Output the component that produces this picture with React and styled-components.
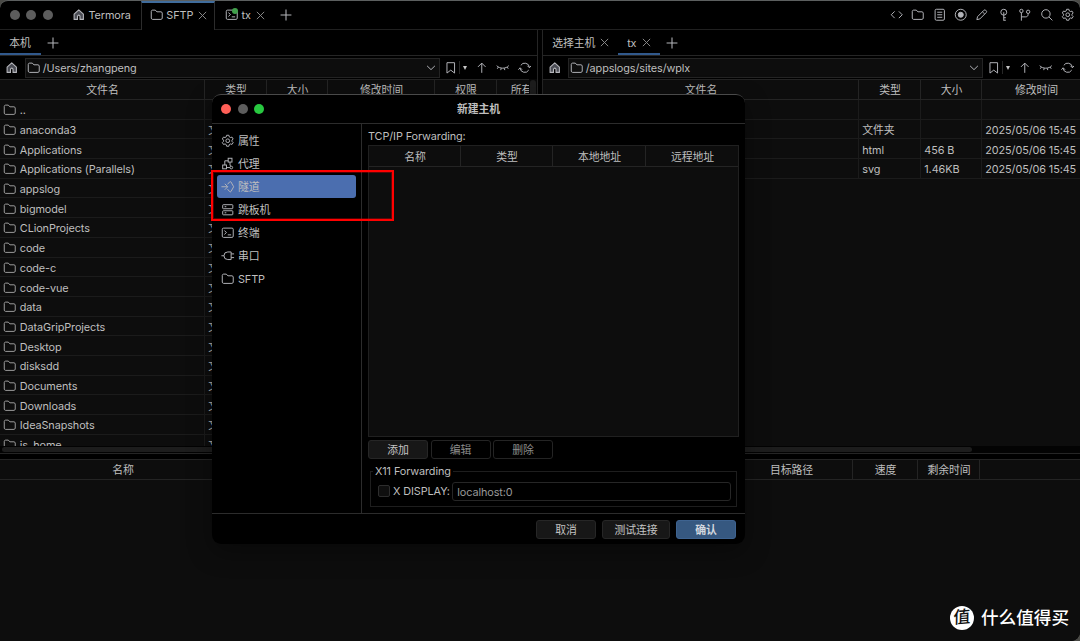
import styled, { createGlobalStyle, css } from "styled-components";

const GlobalStyle = createGlobalStyle`
  :root {
    --color-bg: #000;
    --color-panel: #0d0d0d;
    --color-line: #242424;
    --color-row-line: #1b1b1b;
    --color-text: #bfbfbf;
    --color-accent: #31598c;
  }

  * {
    box-sizing: border-box;
  }

  body {
    margin: 0;
    width: 1080px;
    height: 641px;
    overflow: hidden;
    background: #4a4a46;
    color: var(--color-text);
    font-family: Inter, "Noto Sans CJK SC", sans-serif;
    font-size: 10.86px;
    letter-spacing: -0.1px;
    line-height: 16px;
  }
`;

const Svg = styled.svg`
  display: block;
  flex: none;
  width: 13.5px;
  height: 13.5px;
  fill: none;
  stroke: currentColor;
  stroke-width: 1.15;
  color: ${(props) => props.$color || "#b4b5ba"};
`;

const icons = {
  home: (
    <path
      d="M2.5 7.2 8 2.2l5.5 5v6.3h-4V10a1.5 1.5 0 0 0-3 0v3.5h-4z"
      fill="#4b4d55"
      strokeLinejoin="round"
      strokeWidth="1.3"
    />
  ),
  folder: (
    <path d="M1.5 4c0-.8.7-1.5 1.5-1.5h3.1l2.2 2H13c.8 0 1.5.7 1.5 1.5v6c0 .8-.7 1.5-1.5 1.5H3c-.8 0-1.5-.7-1.5-1.5z" />
  ),
  close: <path d="m3.5 3.5 9 9m0-9-9 9" />,
  plus: <path d="M8 1.8v12.4M1.8 8h12.4" strokeWidth="1.2" />,
  terminal: (
    <>
      <rect x="1.5" y="2.5" width="13" height="11" rx="1.5" />
      <path d="m4 5.5 2.5 2.2L4 10M8 10.5h4" />
    </>
  ),
  code: <path d="m5.5 4-4 4 4 4m5-8 4 4-4 4" />,
  log: (
    <>
      <rect x="2.5" y="1.5" width="11" height="13" rx="1.5" />
      <path d="M5 5h6M5 8h6m-6 3h6" />
    </>
  ),
  record: (
    <>
      <circle cx="8" cy="8" r="6.5" />
      <circle cx="8" cy="8" r="3" fill="currentColor" />
    </>
  ),
  pencil: (
    <path d="M2.2 13.8 3 10.3 10.6 2.7a1.5 1.5 0 0 1 2.1 0l.6.6a1.5 1.5 0 0 1 0 2.1L5.7 13zM8.8 4.5l2.7 2.7" />
  ),
  key: (
    <>
      <circle cx="8" cy="5" r="3.5" />
      <path d="M8 5v10M8 11.5h2.5M8 14.5h2.5" />
    </>
  ),
  branch: (
    <>
      <circle cx="4" cy="3.5" r="2" />
      <circle cx="12" cy="4.5" r="2" />
      <path d="M4 5.5V15M12 6.5v1c0 1.8-1 3-3 3H4" />
    </>
  ),
  search: (
    <>
      <circle cx="7" cy="7" r="5" />
      <path d="m10.7 10.7 4 4" />
    </>
  ),
  gear: (
    <>
      <path
        d="M6.7 1.5h2.6l.6 2 1.2.7 2-.5 1.3 2.2L13 7.3v1.4l1.4 1.4-1.3 2.2-2-.5-1.2.7-.6 2H6.7l-.6-2-1.2-.7-2 .5-1.3-2.2L3 8.7V7.3L1.6 5.9l1.3-2.2 2 .5 1.2-.7z"
        strokeLinejoin="round"
      />
      <circle cx="8" cy="8" r="2.2" />
    </>
  ),
  chevron: <path d="m2.8 5.5 5.2 5 5.2-5" strokeWidth="1.3" />,
  bookmark: <path d="M3.5 2h9v12.3L8 10.8l-4.5 3.5z" />,
  up: <path d="M8 14V2.5M3.5 7 8 2.5 12.5 7" />,
  eye: (
    <path d="M.8 5.5c3.5 4 10.9 4 14.4 0M2.8 7.2 1.5 9.2M6.2 8.5l-.6 2.3M9.8 8.5l.6 2.3M13.2 7.2l1.3 2" />
  ),
  refresh: (
    <path d="M2.500 8.500a5.500 5.500 0 0 0 10.200 2.300M13.500 7.500A5.500 5.500 0 0 0 3.300 5.200M.5 10.300l2-2.300 2.300 2.300M15.500 5.700l-2 2.300-2.300-2.300" />
  ),
  proxy: (
    <>
      <rect x="8.5" y="1.5" width="4.5" height="4.5" />
      <rect x="2" y="9.5" width="4.5" height="4.5" />
      <circle cx="12.2" cy="12.5" r="1.6" />
      <path d="M8.5 4.5h-4v5M6.5 12.5h4M10.7 6v3.5l.8 1.4" />
    </>
  ),
  tunnel: (
    <path d="M.5 8h7.2M4.5 4.5 8 8l-3.5 3.5M7.7 5.2l2.5-2.9q.8-.8 1.6 0L15 8l-3.2 5.7q-.8.8-1.6 0l-2.5-2.9" />
  ),
  server: (
    <>
      <rect x="2" y="2" width="12" height="4.8" rx=".8" />
      <rect x="2" y="9.2" width="12" height="4.8" rx=".8" />
      <path d="M4.3 4.4h2M4.3 11.6h2" />
    </>
  ),
  plug: (
    <path d="M.5 8h3M12 3.5H8A4.5 4.5 0 0 0 8 12.5h4zM12 5.8h3.5M12 10.2h3.5" />
  ),
};

function Icon({ name, color }) {
  return (
    <Svg viewBox="0 0 16 16" $color={color}>
      {icons[name]}
    </Svg>
  );
}

const Window = styled.div`
  position: relative;
  display: flex;
  flex-direction: column;
  width: 1080px;
  height: 641px;
  overflow: hidden;
  background: var(--color-bg);
  border-top: 1px solid #5c5f5f;
  border-radius: 8px 8px 9px 0;
`;

const TitleBar = styled.header`
  display: flex;
  height: 29px;
  flex: none;
  border-bottom: 1px solid #202020;
`;

const Lights = styled.div`
  display: flex;
  align-items: center;
  gap: 6.5px;
  padding-left: ${(props) => props.$left || "9.8px"};
`;

const Light = styled.span`
  width: 10px;
  height: 10px;
  border-radius: 50%;
  background: ${(props) => props.$color || "#5d5d5d"};
`;

const MainTab = styled.div`
  position: relative;
  display: flex;
  align-items: center;
  gap: ${(props) => props.$gap || "3px"};
  width: ${(props) => props.$width};
  height: 28px;
  padding-left: ${(props) => props.$left};
  ${(props) =>
    props.$active &&
    css`
      height: 29px;
      padding-bottom: 3px;
      border: 1px solid #2c2c2c;
      border-top: 2px solid #406c9c;
      border-bottom: none;
      background: #000;
    `}
`;

const CloseButton = styled.span`
  display: flex;
  svg {
    width: 13px;
    height: 13px;
    color: #8d8d8d;
  }
`;

const AddButton = styled.span`
  display: flex;
  align-items: center;
  margin-left: ${(props) => props.$left || "0"};
  svg {
    width: 14px;
    height: 14px;
  }
`;

const OnlineDot = styled.span`
  position: absolute;
  top: 7px;
  left: 17px;
  width: 6px;
  height: 6px;
  border-radius: 50%;
  background: #41a04b;
`;

const Tools = styled.div`
  display: flex;
  align-items: center;
  gap: 7.9px;
  margin-left: auto;
  padding-right: 5.5px;
`;

const Panes = styled.main`
  display: flex;
  gap: 4px;
  height: 424px;
  flex: none;
`;

const Pane = styled.section`
  display: flex;
  flex-direction: column;
  width: 538px;
  min-width: 0;
  overflow: hidden;
  border-left: ${(props) => (props.$divided ? "1px solid #252525" : "none")};
  border-right: ${(props) => (props.$divided ? "none" : "1px solid #252525")};
`;

const SubTabs = styled.div`
  display: flex;
  flex: none;
  height: 26px;
  border-bottom: 1px solid #252525;
`;

const SubTab = styled.div`
  display: flex;
  align-items: center;
  gap: ${(props) => props.$gap || "3px"};
  height: 25px;
  padding: 2px ${(props) => props.$right || "6.5px"} 0 9.3px;
  border-bottom: 2px solid
    ${(props) => (props.$active ? "var(--color-accent)" : "transparent")};
`;

const PathBar = styled.div`
  display: flex;
  align-items: center;
  flex: none;
  height: 23px;
  padding-left: 5.3px;
`;

const PathInput = styled.div`
  display: flex;
  align-items: center;
  gap: 2.5px;
  width: 415px;
  height: 20px;
  margin: 0 4.5px 0 6px;
  padding: 0 2px 0 1px;
  background: var(--color-panel);
  border: 1px solid #242424;

  svg:last-child {
    width: 12px;
    margin-left: auto;
  }
`;

const PathActions = styled.div`
  display: flex;
  align-items: center;
  gap: 8px;
`;

const BookmarkButton = styled.div`
  display: flex;
  align-items: center;
`;

const Separator = styled.span`
  width: 1px;
  height: 13px;
  margin: 0 3px 0 1px;
  background: #272727;
`;

const Caret = styled.span`
  border: 2.5px solid transparent;
  border-top: 4px solid #c5c5c5;
  border-bottom: 0;
`;

const TableArea = styled.div`
  display: flex;
  flex: 1;
  min-height: 0;
  overflow: hidden;
  background: var(--color-panel);
`;

const Table = styled.div`
  width: ${(props) => props.$width};
  flex: none;
`;

const Row = styled.div`
  display: grid;
  grid-template-columns: ${(props) => props.$cols};
  height: 19.7px;
  border-bottom: 1px solid var(--color-row-line);
`;

const HeaderRow = styled(Row)`
  height: 21px;
  border-top: 1px solid var(--color-line);
  border-bottom: 1px solid var(--color-line);
`;

const Cell = styled.div`
  display: flex;
  align-items: center;
  gap: 3px;
  overflow: hidden;
  padding: 2px 3.3px 0;
  white-space: nowrap;
  border-right: 1px solid var(--color-row-line);

  svg {
    margin-top: -0.5px;
  }
`;

const HeaderCell = styled(Cell)`
  justify-content: center;
  padding: 1px 2.5px 0 3.5px;
  border-color: var(--color-line);

  &:last-child {
    border-right: none;
  }
`;

const VerticalScroll = styled.div`
  width: 8px;
  margin-left: auto;
  padding: 1px;
  background: #080808;

  &::before {
    content: "";
    display: block;
    height: 180px;
    border-radius: 3px;
    background: #1d1d1d;
  }
`;

const ScrollTrack = styled.div`
  height: 8px;
  flex: none;
  padding: 1px 2px;
  background: #030303;
  border-bottom: 1px solid #252525;
`;

const ScrollThumb = styled.div`
  width: ${(props) => props.$width};
  height: 5px;
  border-radius: 3px;
  background: #1d1d1d;
`;

const Transfers = styled.section`
  flex: 1;
  margin-top: 5px;
  background: var(--color-panel);
`;

const DialogShadow = styled.div`
  position: absolute;
  top: 93px;
  left: 212px;
  width: 533px;
  height: 450px;
  border-radius: 9px;
  box-shadow: 0 8px 24px rgb(0 0 0 / 35%);
`;

const Dialog = styled.div`
  position: absolute;
  top: 93px;
  left: 212px;
  display: flex;
  flex-direction: column;
  width: 533px;
  height: 450px;
  overflow: hidden;
  background: #000;
  border-top: 1px solid #4a4a4a;
  border-radius: 9px;
`;

const DialogTitle = styled.div`
  display: grid;
  grid-template-columns: 60px 1fr 60px;
  align-items: center;
  height: 29px;
  flex: none;
  font-weight: 700;
  text-align: center;
  border-bottom: 1px solid #2c2c2c;
`;

const DialogBody = styled.div`
  display: flex;
  flex: 1;
  min-height: 0;
`;

const Sidebar = styled.nav`
  width: 150px;
  padding: 5px 5px 0 4.5px;
  border-right: 1px solid #2c2c2c;
`;

const NavItem = styled.div`
  display: flex;
  align-items: center;
  gap: 3.5px;
  height: 23px;
  padding: 0 0 0 4.5px;
  border-radius: 3px;
  background: ${(props) => (props.$active ? "#4b6eaf" : "transparent")};
`;

const Content = styled.div`
  flex: 1;
  padding: 4px 6px 0;
`;

const ForwardTable = styled.div`
  height: 292px;
  margin: 1px 0 3px;
  background: var(--color-panel);
  border: 1px solid #202020;

  ${HeaderRow} {
    border-top: none;
  }
`;

const Buttons = styled.div`
  display: flex;
  gap: ${(props) => props.$gap};
`;

const Button = styled.button`
  width: ${(props) => props.$width || "60px"};
  height: 19px;
  padding: 1px 0 0;
  color: ${(props) => (props.disabled ? "#8c8c8c" : "#c4c4c4")};
  font: inherit;
  letter-spacing: inherit;
  line-height: 16px;
  background: ${(props) => (props.disabled ? "#000" : "#171717")};
  border: 1px solid ${(props) => (props.disabled ? "#242424" : "#262626")};
  border-radius: 3px;

  ${(props) =>
    props.$primary &&
    css`
      color: #d4d9df;
      font-weight: 700;
      background: #365880;
      border-color: #3e6390;
    `}
`;

const Fieldset = styled.fieldset`
  display: flex;
  align-items: center;
  height: 44px;
  margin: 4px 2px 0;
  padding: 0 5px 3px 7px;
  border: 1px solid #1e1e1e;
`;

const Legend = styled.legend`
  margin-left: -5px;
  padding: 0 2px;
`;

const Checkbox = styled.span`
  width: 12px;
  height: 12px;
  margin-right: 3px;
  background: #0f0f0f;
  border: 1px solid #2d2d2d;
  border-radius: 2px;
`;

const DisplayInput = styled.div`
  flex: 1;
  height: 19px;
  margin-left: 2px;
  padding: 1px 4.5px;
  color: #999;
  border: 1px solid #262626;
  border-radius: 3px;
`;

const DialogFooter = styled.footer`
  display: flex;
  justify-content: flex-end;
  height: 31px;
  flex: none;
  padding: 6px 9px 0 0;
  border-top: 1px solid #2c2c2c;
`;

const Highlight = styled.div`
  position: absolute;
  top: 169px;
  left: 211px;
  width: 183px;
  height: 51px;
  border: 2px solid #ff0000;
  box-shadow: inset 0 0 0 1px rgb(255 0 0 / 30%);
`;

const Watermark = styled.div`
  position: absolute;
  right: 11px;
  bottom: 11px;
  display: flex;
  align-items: center;
  gap: 7px;
  color: #fff;
  font-size: 17.6px;
  font-weight: 500;
  letter-spacing: 0;
  line-height: 24px;
`;

const WatermarkBadge = styled.span`
  width: 24px;
  height: 24px;
  color: #111;
  font-size: 17px;
  line-height: 23px;
  text-align: center;
  background: #fff;
  border-radius: 50%;

  span {
    display: block;
    transform: skewX(-6deg) rotate(-5deg);
  }
`;

const localFiles = [
  "..",
  "anaconda3",
  "Applications",
  "Applications (Parallels)",
  "appslog",
  "bigmodel",
  "CLionProjects",
  "code",
  "code-c",
  "code-vue",
  "data",
  "DataGripProjects",
  "Desktop",
  "disksdd",
  "Documents",
  "Downloads",
  "IdeaSnapshots",
  "js_home",
].map((name) => [name, name === ".." ? "" : "文件夹", "", "", "", ""]);

const remoteFiles = [
  ["", "", "", ""],
  ["", "文件夹", "", "2025/05/06 15:45"],
  ["", "html", "456 B", "2025/05/06 15:45"],
  ["", "svg", "1.46KB", "2025/05/06 15:45"],
];

const toolIcons = [
  "code",
  "folder",
  "log",
  "record",
  "pencil",
  "key",
  "branch",
  "search",
  "gear",
];

const navItems = [
  { icon: "gear", label: "属性" },
  { icon: "proxy", label: "代理" },
  { icon: "tunnel", label: "隧道" },
  { icon: "server", label: "跳板机" },
  { icon: "terminal", label: "终端" },
  { icon: "plug", label: "串口" },
  { icon: "folder", label: "SFTP" },
];

function Close() {
  return (
    <CloseButton>
      <Icon name="close" />
    </CloseButton>
  );
}

function PathToolbar({ path }) {
  return (
    <PathBar>
      <Icon name="home" />
      <PathInput>
        <Icon name="folder" />
        {path}
        <Icon name="chevron" />
      </PathInput>
      <PathActions>
        <BookmarkButton>
          <Icon name="bookmark" />
          <Separator />
          <Caret />
        </BookmarkButton>
        <Icon name="up" />
        <Icon name="eye" />
        <Icon name="refresh" />
      </PathActions>
    </PathBar>
  );
}

function FileTable({ headers, files, cols, width }) {
  return (
    <Table $width={width}>
      <HeaderRow $cols={cols}>
        {headers.map((header) => (
          <HeaderCell key={header}>{header}</HeaderCell>
        ))}
      </HeaderRow>
      {files.map((file, i) => (
        <Row key={i} $cols={cols}>
          {file.map((value, j) => (
            <Cell key={j}>
              {j === 0 && value && <Icon name="folder" color="#9f9f9f" />}
              {value}
            </Cell>
          ))}
        </Row>
      ))}
    </Table>
  );
}

function HostDialog() {
  return (
    <Dialog role="dialog">
      <DialogTitle>
        <Lights $left="9.4px">
          <Light $color="#ff5f57" />
          <Light />
          <Light $color="#28c840" />
        </Lights>
        新建主机
      </DialogTitle>
      <DialogBody>
        <Sidebar>
          {navItems.map(({ icon, label }) => (
            <NavItem key={icon} $active={icon === "tunnel"}>
              <Icon name={icon} />
              {label}
            </NavItem>
          ))}
        </Sidebar>
        <Content>
          TCP/IP Forwarding:
          <ForwardTable>
            <HeaderRow $cols="92px 92px 93px 1fr">
              <HeaderCell>名称</HeaderCell>
              <HeaderCell>类型</HeaderCell>
              <HeaderCell>本地地址</HeaderCell>
              <HeaderCell>远程地址</HeaderCell>
            </HeaderRow>
          </ForwardTable>
          <Buttons $gap="2.5px">
            <Button>添加</Button>
            <Button disabled>编辑</Button>
            <Button disabled>删除</Button>
          </Buttons>
          <Fieldset>
            <Legend>X11 Forwarding</Legend>
            <Checkbox />
            X DISPLAY:
            <DisplayInput>localhost:0</DisplayInput>
          </Fieldset>
        </Content>
      </DialogBody>
      <DialogFooter>
        <Buttons $gap="6px">
          <Button>取消</Button>
          <Button $width="68px">测试连接</Button>
          <Button $primary>确认</Button>
        </Buttons>
      </DialogFooter>
    </Dialog>
  );
}

function App() {
  return (
    <>
      <GlobalStyle />
      <Window>
        <TitleBar>
          <Lights>
            <Light />
            <Light />
            <Light />
          </Lights>
          <MainTab $width="88px" $left="19.2px">
            <Icon name="home" />
            Termora
          </MainTab>
          <MainTab $active $width="74px" $left="8px">
            <Icon name="folder" />
            SFTP
            <Close />
          </MainTab>
          <MainTab $width="64px" $left="9.8px" $gap="3.5px">
            <Icon name="terminal" />
            <OnlineDot />
            tx
            <Close />
          </MainTab>
          <AddButton>
            <Icon name="plus" />
          </AddButton>
          <Tools>
            {toolIcons.map((name) => (
              <Icon key={name} name={name} />
            ))}
          </Tools>
        </TitleBar>

        <Panes>
          <Pane>
            <SubTabs>
              <SubTab $active $right="10px">
                本机
              </SubTab>
              <AddButton $left="5px">
                <Icon name="plus" />
              </AddButton>
            </SubTabs>
            <PathToolbar path="/Users/zhangpeng" />
            <TableArea>
              <FileTable
                headers={["文件名", "类型", "大小", "修改时间", "权限", "所有"]}
                files={localFiles}
                cols="205px 62px 61px 107px 62px 48px"
                width="529px"
              />
              <VerticalScroll />
            </TableArea>
            <ScrollTrack>
              <ScrollThumb $width="430px" />
            </ScrollTrack>
          </Pane>
          <Pane $divided>
            <SubTabs>
              <SubTab>
                选择主机
                <Close />
              </SubTab>
              <SubTab $active $gap="4px">
                tx
                <Close />
              </SubTab>
              <AddButton $left="5px">
                <Icon name="plus" />
              </AddButton>
            </SubTabs>
            <PathToolbar path="/appslogs/sites/wplx" />
            <TableArea>
              <FileTable
                headers={["文件名", "类型", "大小", "修改时间"]}
                files={remoteFiles}
                cols="316px 62px 61px 108px"
                width="547px"
              />
            </TableArea>
            <ScrollTrack>
              <ScrollThumb $width="427px" />
            </ScrollTrack>
          </Pane>
        </Panes>

        <Transfers>
          <HeaderRow $cols="246px 484px 123px 65px 62px 1fr">
            <HeaderCell>名称</HeaderCell>
            <HeaderCell />
            <HeaderCell>目标路径</HeaderCell>
            <HeaderCell>速度</HeaderCell>
            <HeaderCell>剩余时间</HeaderCell>
            <HeaderCell />
          </HeaderRow>
        </Transfers>

        <DialogShadow />
        <HostDialog />
        <Highlight />
        <Watermark>
          <WatermarkBadge>
            <span>值</span>
          </WatermarkBadge>
          什么值得买
        </Watermark>
      </Window>
    </>
  );
}

export default App;
